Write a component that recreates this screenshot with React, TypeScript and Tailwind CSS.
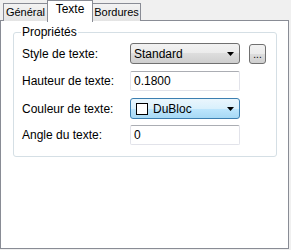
import React from "react";

const font = { fontFamily: '"Liberation Sans", Arial, sans-serif' };

function Arrow() {
  return (
    <svg width="7" height="4" viewBox="0 0 7 4" className="block">
      <path d="M0 0H7L3.5 4Z" fill="#000" />
    </svg>
  );
}

function Row({ label, children }: { label: string; children: React.ReactNode }) {
  return (
    <div className="flex items-center">
      <div className="w-[108px] text-[12px] leading-[14px] text-black">{label}</div>
      {children}
    </div>
  );
}

function TextInput({ value }: { value: string }) {
  return (
    <div className="w-[110px] h-[20px] border border-[#e2e3ea] border-t-[#abadb3] rounded-[2px] bg-white flex items-center pl-[3px] text-[12px] leading-[14px] text-black">
      {value}
    </div>
  );
}

export default function App() {
  return (
    <div style={font} className="w-[291px] h-[250px] bg-[#f0f0f0] flex flex-col">
      {/* Tabs */}
      <div className="h-[21px] flex items-end pl-[3px] relative z-10">
        <div className="h-[18px] w-[45px] border border-b-0 border-[#898c95] bg-[linear-gradient(#f3f3f3,#e4e4e4)] flex items-center justify-center text-[11px] leading-[13px] text-black">
          Général
        </div>
        <div className="h-[22px] w-[46px] -mb-px border border-b-0 border-[#898c95] bg-white flex items-start justify-center pt-[1px] text-[12px] leading-[14px] text-black -ml-px">
          Texte
        </div>
        <div className="h-[18px] w-[49px] border border-b-0 border-[#898c95] bg-[linear-gradient(#f3f3f3,#e4e4e4)] flex items-center justify-center text-[11px] leading-[13px] text-black -ml-px">
          Bordures
        </div>
      </div>
      {/* Panel */}
      <div className="w-[289px] h-[229px] -mt-px border border-[#898c95] bg-white pt-[4px] pl-[12px]">
        <fieldset className="w-[264px] border border-[#d5dfe5] rounded-[3px] pl-[8px] pt-[4px] pb-[11px]">
          <legend className="ml-[-1px] px-[1px] text-[12px] leading-[14px] text-black">Propriétés</legend>
          <div className="flex flex-col">
            <div className="flex items-center">
              <Row label="Style de texte:">
                <div className="w-[110px] h-[21px] border border-[#707070] rounded-[3px] bg-[linear-gradient(#f2f2f2_0%,#ebebeb_50%,#dddddd_50%,#cfcfcf_100%)] flex items-center pl-[3px] pr-[5px] text-[12px] leading-[14px] text-black">
                  <span className="flex-1">Standard</span>
                  <Arrow />
                </div>
              </Row>
              <div className="ml-[9px] w-[17px] h-[20px] border border-[#707070] rounded-[3px] bg-[linear-gradient(#f2f2f2_0%,#ebebeb_50%,#dddddd_50%,#cfcfcf_100%)] flex items-end justify-center pb-[3px] text-[10px] leading-[10px] text-black">
                ...
              </div>
            </div>
            <div className="mt-[7px]">
              <Row label="Hauteur de texte:">
                <TextInput value="0.1800" />
              </Row>
            </div>
            <div className="mt-[7px]">
              <Row label="Couleur de texte:">
                <div className="w-[110px] h-[21px] border border-[#3c7fb1] rounded-[3px] bg-[linear-gradient(#eaf6fd_0%,#d9f0fc_50%,#bee6fd_50%,#a7d9f5_100%)] flex items-center pl-[5px] pr-[5px] text-[12px] leading-[14px] text-black">
                  <span className="w-[12px] h-[12px] border border-black bg-white mr-[5px]" />
                  <span className="flex-1">DuBloc</span>
                  <Arrow />
                </div>
              </Row>
            </div>
            <div className="mt-[6px]">
              <Row label="Angle du texte:">
                <TextInput value="0" />
              </Row>
            </div>
          </div>
        </fieldset>
      </div>
    </div>
  );
}
